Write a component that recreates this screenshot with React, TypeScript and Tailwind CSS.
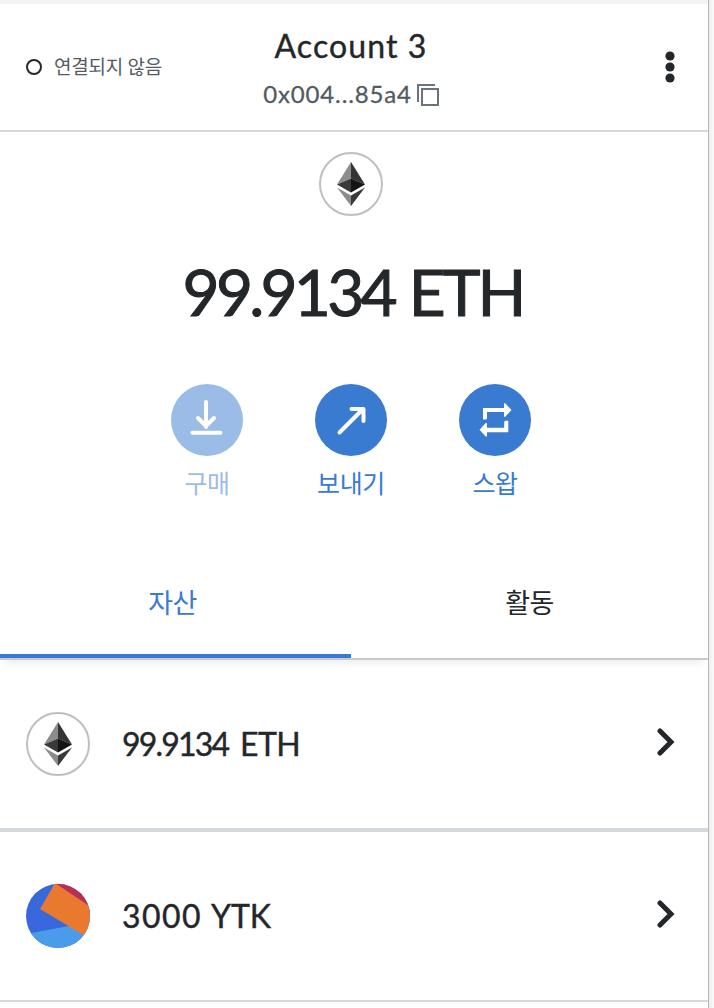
import { useState } from 'react';

interface Asset {
  symbol: string;
  amount: string;
  icon: React.ReactNode;
  amountClass: string;
  symbolClass: string;
}

const assets: Asset[] = [
  { symbol: 'ETH', amount: '99.9134', icon: <EthBadge />, amountClass: 'w-[118px] tracking-[-1.8px]', symbolClass: 'tracking-[-0.6px]' },
  { symbol: 'YTK', amount: '3000', icon: <TokenBadge />, amountClass: 'w-[89px] tracking-[1.4px]', symbolClass: 'tracking-[0px]' },
];

export default function App() {
  const [tab, setTab] = useState('assets');

  return (
    <div className="flex h-[1008px] w-[714px] overflow-hidden bg-white font-['Lato','Noto_Sans_CJK_KR',sans-serif] text-[#24272a]">
      <div className="flex w-[708px] shrink-0 flex-col">
        <div className="h-1 shrink-0 bg-[#f2f3f5]" />
        <Header />

        <section className="flex h-[450px] w-[702px] shrink-0 flex-col items-center pt-5">
          <EthBadge />
          <h1 className="mt-9 ml-1 flex h-[82px] gap-[15px] text-[64px] leading-[80px] whitespace-nowrap [-webkit-text-stroke:1px_#24272a]">
            <span className="tracking-[-3.8px]">99.9134</span>
            <span className="tracking-[-3px]">ETH</span>
          </h1>
          <div className="mt-[50px] flex">
            <ActionButton label="구매" icon={<BuyIcon />} disabled />
            <ActionButton label="보내기" icon={<SendIcon />} />
            <ActionButton label="스왑" icon={<SwapIcon />} />
          </div>
        </section>

        <div className="z-10 flex h-[78px] shrink-0 border-b-2 border-[#c8cacd] shadow-[0_8px_8px_-5px_rgba(0,0,0,0.08)]">
          <Tab label="자산" active={tab === 'assets'} onClick={() => setTab('assets')} />
          <Tab label="활동" active={tab === 'activity'} onClick={() => setTab('activity')} />
        </div>

        <ul className="shrink-0">
          {assets.map((asset) => (
            <li key={asset.symbol} className="flex h-[172px] items-center border-b-4 border-[#d6d9dc] pr-[33px] pl-[26px] last:h-[170px] last:border-b-2">
              {asset.icon}
              <div className="ml-8 flex flex-1 text-[32px] leading-10 [-webkit-text-stroke:0.4px_#24272a]">
                <span className={asset.amountClass}>{asset.amount}</span>
                <span className={asset.symbolClass}>{asset.symbol}</span>
              </div>
              <svg width="18" height="28" viewBox="0 0 18 28" fill="none" className="mb-1">
                <path d="M3 3 14 14 3 25" stroke="#24272a" strokeWidth="5" strokeLinecap="round" />
              </svg>
            </li>
          ))}
        </ul>
      </div>
      <div className="w-1.5 shrink-0 border-l border-[#b5b8bb] bg-linear-to-r from-[#eeeeee] to-[#fafafa]" />
    </div>
  );
}

function Header() {
  return (
    <header className="grid h-32 shrink-0 grid-cols-[200px_302px_206px] items-center border-b-2 border-[#d6d9dc]">
      <div className="flex items-center pl-[26px]">
        <span className="h-4 w-4 rounded-full border-2 border-[#24272a]" />
        <span className="ml-3 text-[19px] leading-6 tracking-[-0.25px] text-[#535a61]">연결되지 않음</span>
      </div>
      <div className="flex flex-col items-center pt-1.5">
        <span className="text-[32px] leading-[44px] tracking-[1.1px] [-webkit-text-stroke:0.4px_#24272a]">Account 3</span>
        <div className="mt-1 flex h-11 items-center text-[#535a61]">
          <span className="text-[24px] leading-8 tracking-[0.85px] [-webkit-text-stroke:0.3px_#535a61]">0x004...85a4</span>
          <svg width="22" height="22" viewBox="0 0 22 22" fill="none" stroke="#6a737d" strokeWidth="2" className="mt-0.5 ml-[5px]">
            <path d="M1 18V1h17" />
            <path d="M5 5h16v16H5z" />
          </svg>
        </div>
      </div>
      <button className="mr-[33px] justify-self-end" aria-label="Menu">
        <svg width="10" height="32" viewBox="0 0 10 32" fill="#24272a">
          <circle cx="5" cy="5" r="4.6" />
          <circle cx="5" cy="16" r="4.6" />
          <circle cx="5" cy="27" r="4.6" />
        </svg>
      </button>
    </header>
  );
}

function ActionButton({ label, icon, disabled }: { label: string; icon: React.ReactNode; disabled?: boolean }) {
  return (
    <button disabled={disabled} className={`flex w-36 flex-col items-center text-[#387bd0] ${disabled ? 'opacity-50' : ''}`}>
      <span className="flex h-[72px] w-[72px] items-center justify-center rounded-full bg-[#387bd0]">{icon}</span>
      <span className="mt-2.5 text-[25px] leading-[34px] tracking-[-0.4px]">{label}</span>
    </button>
  );
}

function Tab({ label, active, onClick }: { label: string; active: boolean; onClick: () => void }) {
  return (
    <button
      onClick={onClick}
      className={`flex-1 border-b-4 pb-[30px] text-[27px] leading-10 tracking-[-0.5px] first:w-[351px] first:flex-none first:pr-1.5 ${
        active ? 'border-[#387bd0] text-[#387bd0]' : 'border-transparent text-[#24272a]'
      }`}
    >
      {label}
    </button>
  );
}

// ===== Icons =====
function EthBadge() {
  return (
    <svg width="64" height="64" viewBox="0 0 64 64" className="shrink-0">
      <circle cx="32" cy="32" r="31" fill="#fff" stroke="#bbc0c5" strokeWidth="2" />
      <path d="M32 10 18 32.5l14-6z" fill="#8c8c8c" />
      <path d="M32 10v16.5l14 6z" fill="#343434" />
      <path d="M18 32.5 32 26.5v14z" fill="#393939" />
      <path d="M46 32.5 32 26.5v14z" fill="#141414" />
      <path d="M18 35.5 32 43.5V54z" fill="#8c8c8c" />
      <path d="M46 35.5 32 43.5V54z" fill="#393939" />
    </svg>
  );
}

function TokenBadge() {
  return (
    <svg width="64" height="64" viewBox="0 0 64 64" className="shrink-0">
      <clipPath id="token">
        <circle cx="32" cy="32" r="32" />
      </clipPath>
      <g clipPath="url(#token)">
        <path d="M0 0h64v64H0z" fill="#3868db" />
        <path d="M0 50 64 38v26H0z" fill="#4a9be9" />
        <path d="M29 0h35v30z" fill="#b92e53" />
        <path d="M29-1 64 22.5V55L14 25z" fill="#e8792f" />
      </g>
    </svg>
  );
}

function BuyIcon() {
  return (
    <svg width="72" height="72" viewBox="0 0 72 72" fill="none" stroke="#fff" strokeWidth="4" strokeLinecap="round" strokeLinejoin="round">
      <path d="M35 18v25M27 34l8 8 8-8M21.5 48.8h28" />
    </svg>
  );
}

function SendIcon() {
  return (
    <svg width="72" height="72" viewBox="0 0 72 72" fill="none" stroke="#fff" strokeWidth="4" strokeLinecap="round" strokeLinejoin="round">
      <path d="M24.5 48.5 48 25M36.5 25H48.5v12" />
    </svg>
  );
}

function SwapIcon() {
  return (
    <svg width="72" height="72" viewBox="0 0 72 72" fill="#fff">
      <path d="M24 35V24h21v-4.5l1-.4 6.500 6.900-6.500 6.900-1-.4V28H28v6.500l-1 1h-2.500z" />
      <path d="M49.300 37v11.200H28v4l-1 .5-6.500-7 6.500-6.900 1 .4v4.600h17.200v-6l1-1h2.600z" />
    </svg>
  );
}
